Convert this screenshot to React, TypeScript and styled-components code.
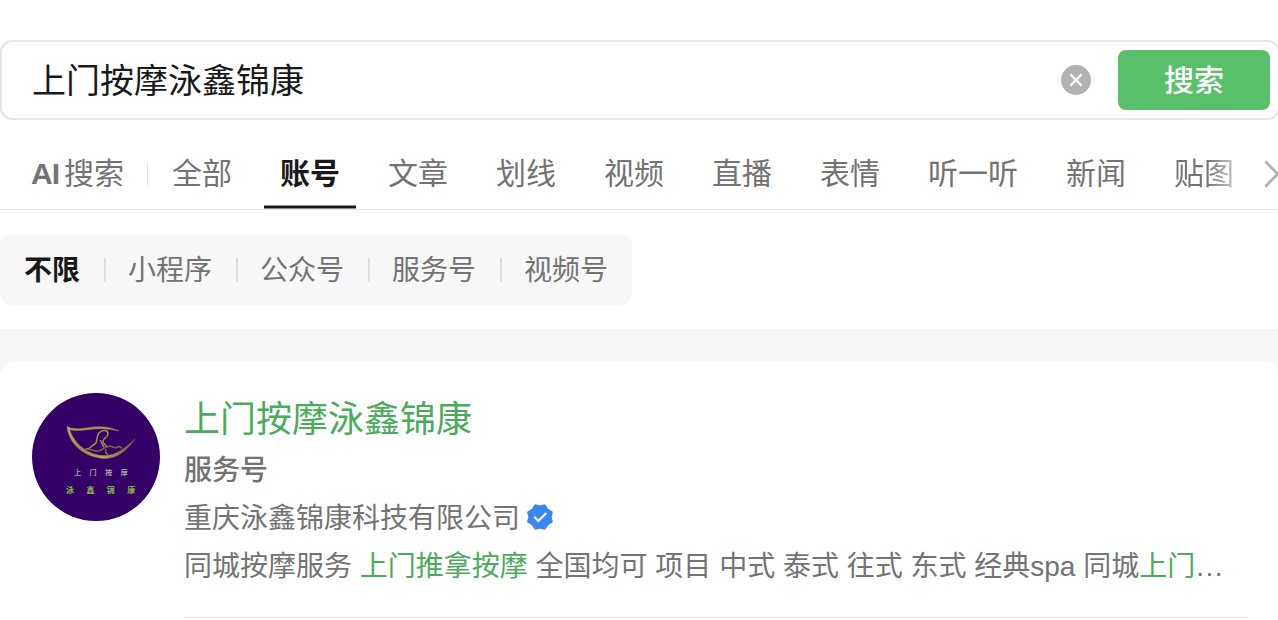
import styled, { createGlobalStyle } from "styled-components";

const tabs = [
  "全部",
  "账号",
  "文章",
  "划线",
  "视频",
  "直播",
  "表情",
  "听一听",
  "新闻",
  "贴图",
];
const filters = ["不限", "小程序", "公众号", "服务号", "视频号"];

const App = () => {
  return (
    <Page>
      <GlobalStyle />
      <SearchBar>
        <Keyword>上门按摩泳鑫锦康</Keyword>
        <ClearButton aria-label="清除">
          <svg width="30" height="30" viewBox="0 0 30 30" fill="none">
            <circle cx="15" cy="15" r="15" fill="#b2b2b2" />
            <path
              d="M9.4 9.4L20.6 20.6M20.6 9.4L9.4 20.6"
              stroke="#fff"
              strokeWidth="2.3"
            />
          </svg>
        </ClearButton>
        <SearchButton>搜索</SearchButton>
      </SearchBar>
      <TabBar>
        <AiTab>
          <b>AI</b>搜索
        </AiTab>
        <TabDivider />
        <TabList>
          {tabs.map((tab) => (
            <Tab key={tab} $active={tab === "账号"} $fade={tab === "贴图"}>
              {tab}
            </Tab>
          ))}
        </TabList>
        <MoreButton aria-label="更多">
          <svg width="16" height="30" viewBox="0 0 16 30" fill="none">
            <path
              d="M1.2 2.3L13.7 15L1.2 27.7"
              stroke="#b2b2b2"
              strokeWidth="2.8"
            />
          </svg>
        </MoreButton>
      </TabBar>
      <FilterBar>
        {filters.map((filter, idx) => (
          <Filter key={filter} $active={idx === 0}>
            {filter}
          </Filter>
        ))}
      </FilterBar>
      <Results>
        <Card>
          <Avatar>
            <AvatarLogo />
          </Avatar>
          <Info>
            <Name>上门按摩泳鑫锦康</Name>
            <Kind>服务号</Kind>
            <Line>
              <LineText>重庆泳鑫锦康科技有限公司</LineText>
              <VerifiedIcon />
            </Line>
            <Line>
              <LineText>
                同城按摩服务 <em>上门推拿按摩</em> 全国均可 项目 中式 泰式 往式
                东式 经典spa 同城<em>上门</em>
                <Dots>...</Dots>
              </LineText>
            </Line>
          </Info>
        </Card>
      </Results>
    </Page>
  );
};

export default App;

const AvatarLogo = () => (
  <svg width="128" height="128" viewBox="0 0 128 128" fill="none">
    <defs>
      <linearGradient id="gold" x1="35" y1="34" x2="103" y2="64" gradientUnits="userSpaceOnUse">
        <stop offset="0" stopColor="#b9aa52" />
        <stop offset="0.3" stopColor="#a08c4e" />
        <stop offset="0.6" stopColor="#b9a650" />
        <stop offset="1" stopColor="#704747" />
      </linearGradient>
    </defs>
    <path
      d="M35 33.3C40 36.8 47 36 57 34.4C68 32.8 78 33.6 87 38C78 35.8 68 35 58 36.4C48 37.8 42 38 37.8 36.6C40 46 52 61 69 62.6C83 63.6 93 56 103 45.5C95 58 84 67 69 65.2C50 62.9 36.2 49 35 33.3Z"
      fill="url(#gold)"
      stroke="url(#gold)"
      strokeWidth="0.4"
    />
    <path
      d="M54 56C59 56.5 59 52.5 63 51C66 49.5 63.5 44 67 40C70 36.5 76 36.5 76 40.5C76 45 71.5 45 71 48C70.5 51 74 51.5 75 54M68.5 47C69 50 71 52 72 54"
      stroke="#a88c52"
      strokeWidth="1.5"
    />
    <path
      d="M53 56.5C59 55 63 59.5 68 57.5C73 55.5 73 53 78 53.2C82 53.5 82 56 85 54.3C87.5 52.8 89 54 90 55.5M74 56C73 58 73.5 60 76 61.5"
      stroke="#7e6550"
      strokeWidth="1.6"
    />
    <text x="42" y="82" fontSize="7" fontWeight="700" letterSpacing="8.6" fill="#aaa7a4">
      上门按摩
    </text>
    <text x="34" y="100" fontSize="8" fontWeight="700" letterSpacing="12.4" fill="#86b744">
      泳鑫锦康
    </text>
  </svg>
);

const VerifiedIcon = () => (
  <svg width="26" height="26" viewBox="0 0 26 26" fill="none">
    <path
      d="M13 2.4L17.6 1.2L20.5 5.5L24.8 8.4L23.6 13L24.8 17.6L20.5 20.5L17.6 24.8L13 23.6L8.4 24.8L5.5 20.5L1.2 17.6L2.4 13L1.2 8.4L5.5 5.5L8.4 1.2Z"
      fill="#3b87f0"
      stroke="#3b87f0"
      strokeWidth="2"
      strokeLinejoin="round"
    />
    <path d="M7.2 12.8L11.4 17L19.3 9.1" stroke="#fff" strokeWidth="2.1" />
  </svg>
);

const GlobalStyle = createGlobalStyle`
  body {
    margin: 0;
    background: #fff;
    overflow: hidden;
    font-family: "Liberation Sans", "Noto Sans CJK SC", sans-serif;
  }
  button {
    border: 0;
    padding: 0;
    background: none;
    font-family: inherit;
  }
  svg {
    display: block;
    flex: none;
  }
`;

const Page = styled.div`
  width: 1278px;
  height: 620px;
  padding-top: 40px;
  box-sizing: border-box;
  overflow: hidden;
`;

const SearchBar = styled.div`
  display: flex;
  align-items: center;
  height: 80px;
  width: 1280px;
  padding: 0 8px 0 30px;
  box-sizing: border-box;
  border: 2px solid #e5e5e5;
  border-radius: 12px;
`;

const Keyword = styled.div`
  flex: 1;
  padding-top: 1px;
  font-size: 34px;
  line-height: 50px;
  color: #191919;
`;

const ClearButton = styled.button`
  margin-right: 27px;
`;

const SearchButton = styled.button`
  width: 152px;
  height: 60px;
  padding-top: 2px;
  border-radius: 8px;
  background: #5abf6b;
  color: #fff;
  font-size: 30px;
  font-weight: 500;
  line-height: 58px;
`;

const TabBar = styled.div`
  display: flex;
  align-items: center;
  width: 1280px;
  height: 90px;
  padding-left: 32px;
  box-sizing: border-box;
  border-bottom: 1px solid #e5e5e5;
  color: #737373;
  font-size: 30px;
`;

const AiTab = styled.div`
  display: flex;
  width: 92px;
  justify-content: space-between;
  line-height: 44px;
  margin-top: 18px;
  height: 44px;
  b {
    margin-left: -1px;
    letter-spacing: -1px;
  }
`;

const TabDivider = styled.div`
  width: 1px;
  height: 24px;
  margin: 18px 8px 0 23px;
  background: #e5e5e5;
`;

const TabList = styled.div`
  display: flex;
  gap: 16px;
  height: 89px;
`;

const Tab = styled.div<{ $active: boolean; $fade: boolean }>`
  padding: 32px 16px 0;
  height: 89px;
  box-sizing: border-box;
  line-height: 44px;
  white-space: nowrap;
  color: ${({ $active }) => ($active ? "#191919" : "#737373")};
  font-weight: ${({ $active }) => ($active ? 700 : 400)};
  ${({ $active }) =>
    $active &&
    "background: linear-gradient(#8c8c8c 1px, #191919 1px 3px, #8c8c8c 3px) bottom / 100% 4px no-repeat;"}
  ${({ $fade }) =>
    $fade &&
    "mask-image: linear-gradient(90deg, #000 48px, rgba(0, 0, 0, 0.4) 77px);"}
`;

const MoreButton = styled.button`
  margin: 18px 0 0 14px;
`;

const FilterBar = styled.div`
  display: inline-flex;
  align-items: center;
  height: 71px;
  margin-top: 24px;
  border-radius: 12px;
  background: #f7f7f7;
  vertical-align: top;
`;

const Filter = styled.div<{ $active: boolean }>`
  display: flex;
  align-items: center;
  padding-right: 24px;
  font-size: 28px;
  line-height: 38px;
  padding-top: 3px;
  color: ${({ $active }) => ($active ? "#191919" : "#737373")};
  font-weight: ${({ $active }) => ($active ? 700 : 400)};
  &:first-child {
    padding-left: 24px;
  }
  &:not(:first-child)::before {
    content: "";
    width: 2px;
    height: 24px;
    margin: -3px 22px 0 0;
    background: #dedede;
  }
`;

const Results = styled.div`
  margin-top: 24px;
  padding-top: 32px;
  background: #f7f7f7;
`;

const Card = styled.div`
  display: flex;
  gap: 24px;
  width: 1280px;
  height: 280px;
  padding: 32px 32px 0;
  box-sizing: border-box;
  border-radius: 16px 16px 0 0;
  background: #fff;
`;

const Avatar = styled.div`
  flex: none;
  width: 128px;
  height: 128px;
  border-radius: 50%;
  background: #350066;
  overflow: hidden;
`;

const Info = styled.div`
  flex: 1;
  height: 225px;
  box-sizing: border-box;
  border-bottom: 1px solid #e5e5e5;
  color: #737373;
  font-size: 28px;
  em {
    font-style: normal;
    color: #4aab5b;
  }
`;

const Name = styled.div`
  height: 52px;
  font-size: 36px;
  line-height: 54px;
  color: #4aab5b;
`;

const Kind = styled.div`
  height: 48px;
  line-height: 52px;
  font-weight: 500;
`;

const Line = styled.div`
  display: flex;
  align-items: center;
  height: 48px;
  white-space: nowrap;
  svg {
    margin-left: 7px;
  }
`;

const LineText = styled.span`
  padding-top: 4px;
  line-height: 46px;
`;

const Dots = styled.span`
  margin-left: 1px;
  letter-spacing: 1.5px;
`;
